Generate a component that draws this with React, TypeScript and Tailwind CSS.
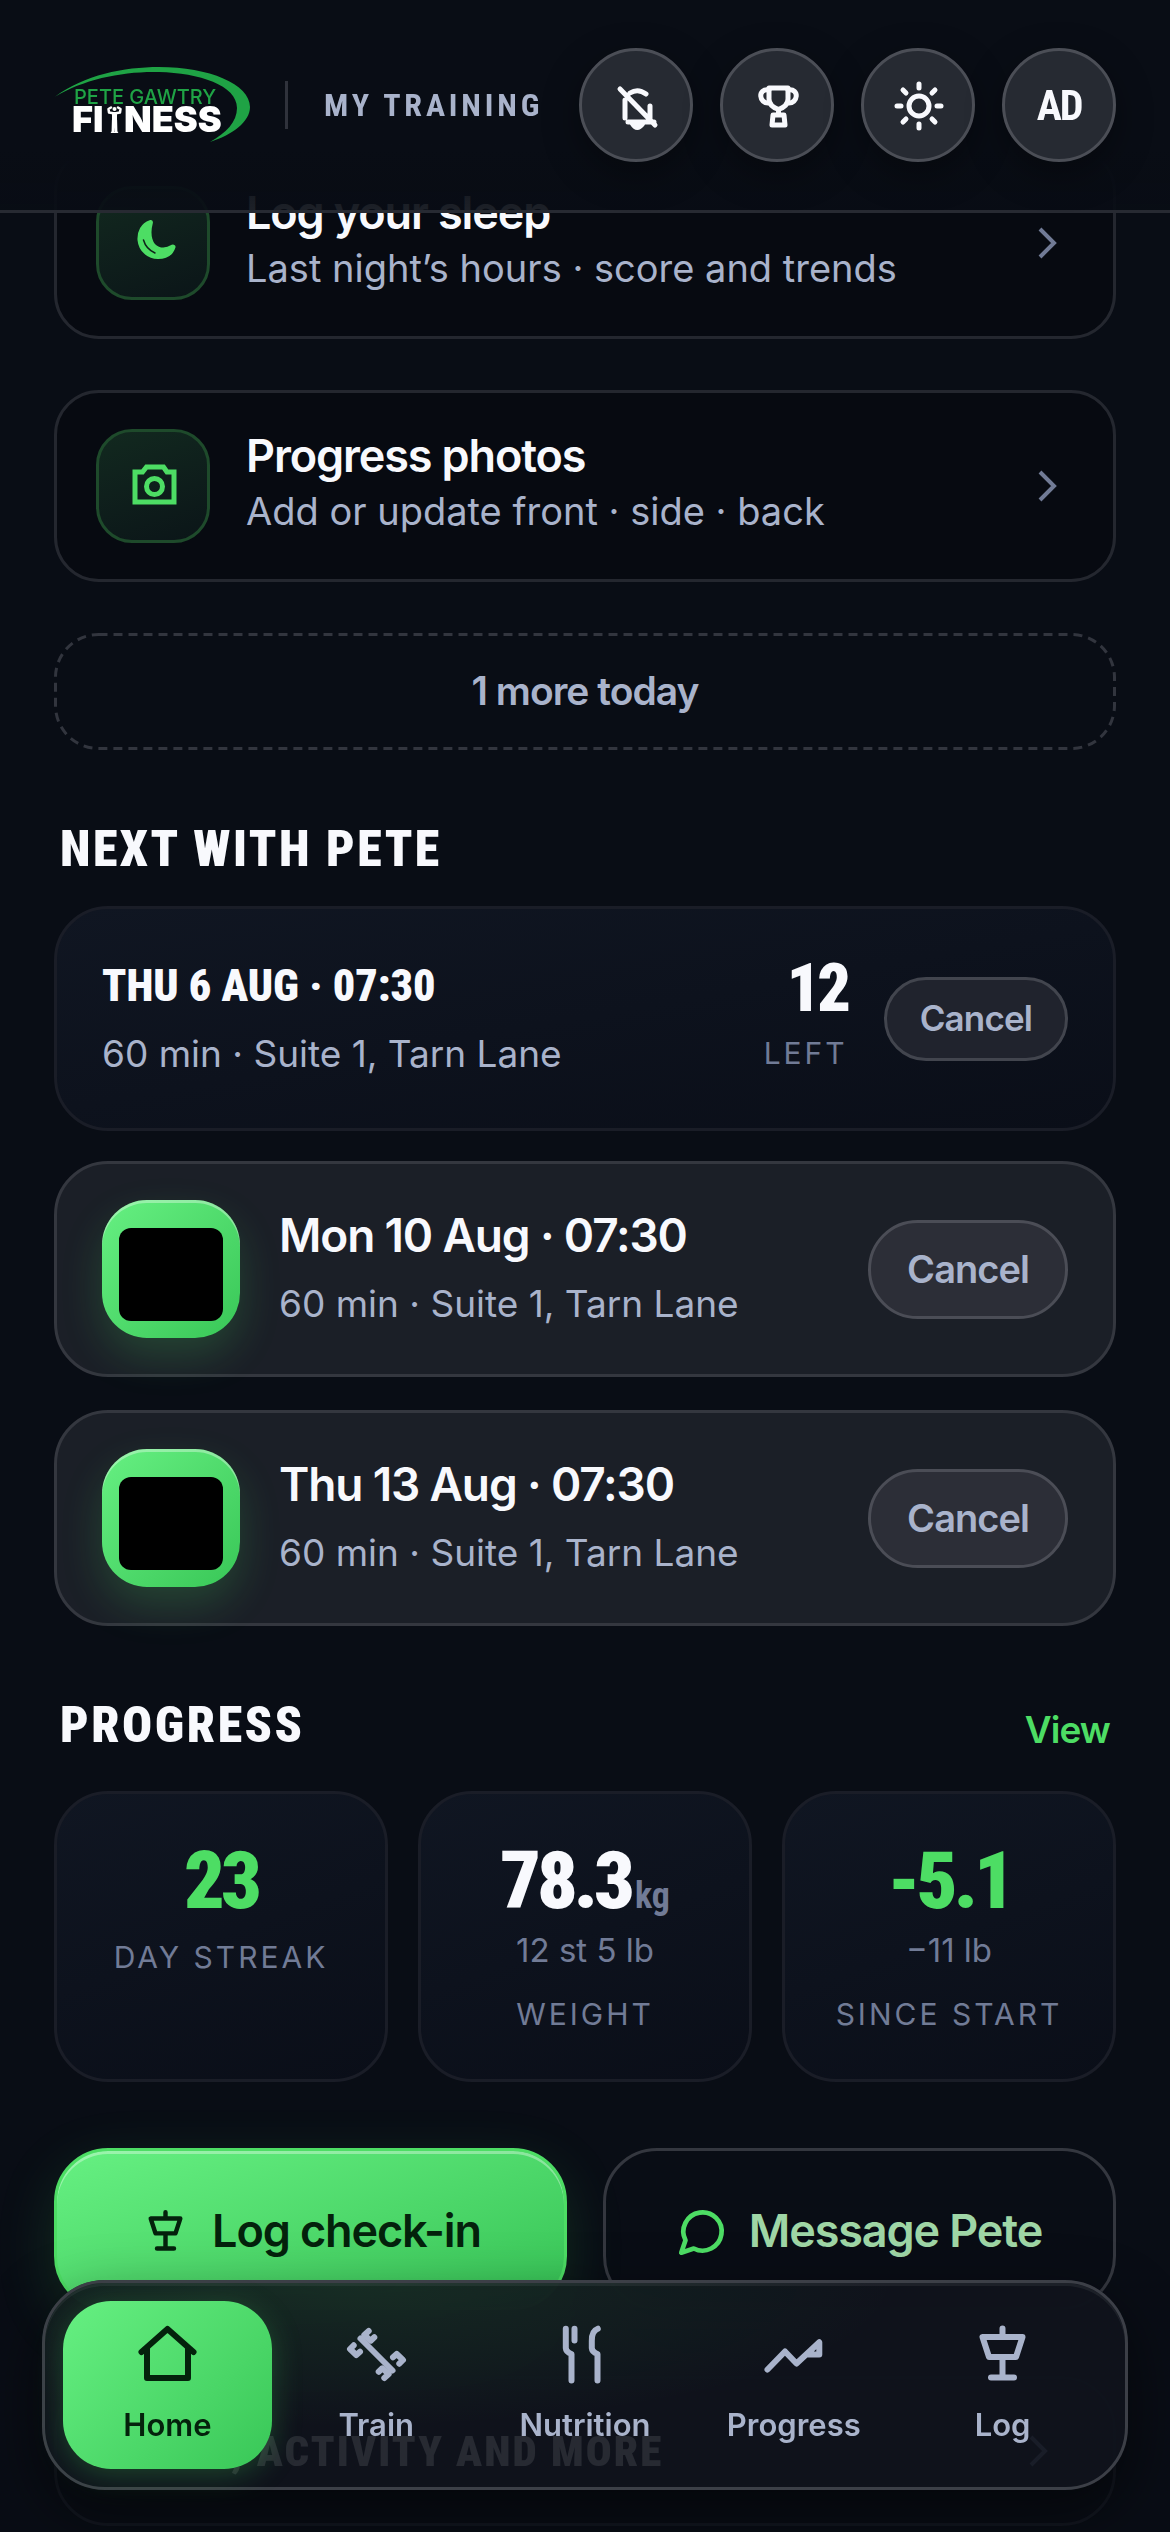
import type { ReactNode } from 'react';
import clsx from 'clsx';

const condensed = "font-['Roboto_Condensed','Liberation_Sans_Narrow',sans-serif]";

const sessions = [
  { id: 'mon', title: 'Mon 10 Aug · 07:30', detail: '60 min · Suite 1, Tarn Lane' },
  { id: 'thu', title: 'Thu 13 Aug · 07:30', detail: '60 min · Suite 1, Tarn Lane' },
];

type IconProps = {
  className?: string;
  box?: string;
  width?: number;
  children: ReactNode;
};

function Icon({ className, box = '0 0 69 69', width = 6, children }: IconProps) {
  return (
    <svg
      className={className}
      viewBox={box}
      fill="none"
      stroke="currentColor"
      strokeWidth={width}
      strokeLinecap="round"
      strokeLinejoin="round"
      aria-hidden="true"
    >
      {children}
    </svg>
  );
}

function ScaleShape() {
  return <path d="M34.5 8.5V17M14.5 17H54.5L48 37H21ZM34.5 37V57.5M23 57.5H46" />;
}

function Chevron({ className }: { className?: string }) {
  return (
    <Icon className={clsx('h-9 w-9 shrink-0', className)} box="0 0 36 36" width={4}>
      <path d="M11 4 25 18 11 32" strokeLinecap="butt" strokeLinejoin="miter" />
    </Icon>
  );
}

function Logo() {
  return (
    <svg className="h-[76px] w-[196px] shrink-0" viewBox="0 0 196 76" role="img" aria-label="Pete Gawtry Fitness">
      <path
        fill="#1fa345"
        d="M1 29.7C30 8 70 0 105 0C155 0 196 17 196 40C196 55 178 68 156 75C172 66 183 55 183 41C183 18 145 6 105 5C70 4 30 12 1 29.7Z"
      />
      <text x="20" y="37" fill="#1fa345" className="font-['Inter',sans-serif] text-[20px] font-medium">
        PETE GAWTRY
      </text>
      <text x="18" y="65" fill="#fff" className="font-['Inter',sans-serif] text-[36px] font-black">
        FI
      </text>
      <g fill="none" stroke="#fff" strokeLinecap="round" strokeLinejoin="round">
        <circle cx="60.5" cy="42" r="2" fill="#fff" stroke="none" />
        <path strokeWidth="2.5" d="M57 40.5 54.5 42 55 45.5 60.5 46.5 66 45.5 66.5 42 64 40.5" />
        <path strokeWidth="5" d="M60.5 47.5V52" />
        <path strokeWidth="2.8" d="M59.3 53 59 64M61.7 53 62 64" />
        <path strokeWidth="1.5" d="M57.5 65.2H63.5" />
      </g>
      <text x="70" y="65" fill="#fff" className="font-['Inter',sans-serif] text-[36px] font-black">
        NESS
      </text>
    </svg>
  );
}

function RoundButton({ label, children }: { label: string; children: ReactNode }) {
  return (
    <button
      type="button"
      aria-label={label}
      className="flex h-[114px] w-[114px] items-center justify-center rounded-full border-3 border-[#4b4e56] bg-[#262a32] text-[#f8f9fd] shadow-[0_12px_36px_rgba(0,0,0,0.35)]"
    >
      {children}
    </button>
  );
}

function Header() {
  return (
    <header className="fixed inset-x-0 top-0 z-40 flex h-[213px] items-center justify-between border-b-3 border-[#272a32] bg-linear-to-b from-[#090d15] from-70% to-[#090d15]/92 px-[54px]">
      <div className="flex items-center">
        <Logo />
        <span className="ml-[35px] h-12 w-[3px] bg-[#2f323b]" />
        <span className={clsx(condensed, 'ml-9 text-[32px] font-bold tracking-[0.12em] text-[#a9b3cb]')}>
          MY TRAINING
        </span>
      </div>
      <div className="flex gap-[27px]">
        <RoundButton label="Notifications off">
          <Icon className="h-[60px] w-[60px]" box="-30 -30 60 60" width={5}>
            <path d="M-16-16 19 20M-6-12Q2-17 10-11M-11-5V13M14 1V14M-8 17H18" />
            <path d="M-4 19Q1 27 7 19Z" strokeWidth={4} />
          </Icon>
        </RoundButton>
        <RoundButton label="Achievements">
          <Icon className="h-[60px] w-[60px]" box="-30 -30 60 60" width={5}>
            <path d="M-8-17H11V-6Q11 1 1.5 4.5Q-8 1-8-6ZM1.5 4.5V9" />
            <path d="M-8-15C-20-17-18-1-8-2M11-15C23-17 21-1 11-2" />
            <path d="M-4 10H7L8 20H-5Z" />
          </Icon>
        </RoundButton>
        <RoundButton label="Light mode">
          <Icon className="h-[60px] w-[60px]" box="-30 -30 60 60" width={5}>
            <circle cx="1" cy="1" r="10" />
            <path d="M1-21V-17M1 19V23M-21 1H-17M19 1H23M-15-15-12-12M14 14 17 17M17-15 14-12M-12 14-15 17" />
          </Icon>
        </RoundButton>
        <RoundButton label="Account">
          <span className={clsx(condensed, 'text-[42px] font-bold tracking-tighter')}>AD</span>
        </RoundButton>
      </div>
    </header>
  );
}

function TaskCard({ icon, title, detail }: { icon: ReactNode; title: string; detail: string }) {
  return (
    <a
      href="#task"
      className="flex h-48 items-center gap-9 rounded-[45px] border-3 border-[#24272f] bg-[#070a11] px-[39px]"
    >
      <span className="flex h-[114px] w-[114px] shrink-0 items-center justify-center rounded-[36px] border-3 border-[#1e4a2b] bg-linear-160 from-[#12291f] to-[#0b1518] text-[#4ddd64]">
        {icon}
      </span>
      <span className="flex flex-1 flex-col pb-[9px]">
        <span className="text-[45px] leading-[60px] font-semibold tracking-tight text-[#f8f9fd]">{title}</span>
        <span className="text-[38px] leading-[51px] text-[#a9b3cb]">{detail}</span>
      </span>
      <Chevron className="mr-[9px] text-[#717b96]" />
    </a>
  );
}

function SectionTitle({ children }: { children: ReactNode }) {
  return (
    <h2 className={clsx(condensed, 'text-[50px] leading-[60px] font-black tracking-wider text-[#f8f9fd]')}>
      {children}
    </h2>
  );
}

type StatProps = {
  value: string;
  unit?: string;
  note?: string;
  label: string;
  green?: boolean;
};

function Stat({ value, unit, note, label, green }: StatProps) {
  return (
    <div className="flex h-[291px] flex-col items-center rounded-[54px] border-3 border-[#1a1d27] bg-linear-160 from-[#101622] to-[#0a0e18] pt-[45px] text-[#717b96]">
      <p
        className={clsx(
          condensed,
          'text-[80px] leading-[84px] font-black tracking-tighter',
          green ? 'text-[#4ddd64]' : 'text-[#f8f9fd]',
        )}
      >
        {value}
        {unit && (
          <span className="ml-1 text-[36px] leading-none font-bold tracking-normal text-[#717b96]">{unit}</span>
        )}
      </p>
      {note && <p className="mt-[3px] mb-[6px] text-[33px] leading-[48px]">{note}</p>}
      <p className="mt-3 text-[30px] leading-[45px] tracking-[0.1em]">{label}</p>
    </div>
  );
}

function NavItem({ label, active, children }: { label: string; active?: boolean; children: ReactNode }) {
  return (
    <a
      href={`#${label.toLowerCase()}`}
      aria-current={active ? 'page' : undefined}
      className={clsx(
        'flex h-[168px] flex-1 flex-col items-center justify-center gap-[15px] rounded-[48px] pb-1 text-[31px] leading-[42px] font-semibold',
        active
          ? 'bg-linear-135 from-[#66f082] to-[#38c757] text-[#04220c] shadow-[0_6px_30px_rgba(74,222,98,0.25)]'
          : 'text-[#a9b3cb]',
      )}
    >
      <Icon className="h-[69px] w-[69px]">{children}</Icon>
      {label}
    </a>
  );
}

function TabBar() {
  return (
    <nav className="fixed inset-x-[42px] bottom-[42px] z-30 flex rounded-[63px] border-3 border-[#3c3f47] bg-[#0f131c]/90 bg-[radial-gradient(ellipse_at_28%_0%,rgba(74,222,98,0.11),transparent_50%)] p-[18px] shadow-[0_24px_60px_rgba(0,0,0,0.5),inset_0_3px_0_rgba(255,255,255,0.06)]">
      <NavItem label="Home" active>
        <path d="M8.5 32 34.5 9 60.5 32M14 28V58H55V28" />
      </NavItem>
      <NavItem label="Train">
        <path d="M18.5 18.5 50.5 50.5" />
        <path d="M26.7 11 22.3 15 28.7 20.7 32.3 17.3M11.7 25.3 8 29 14.3 35 18 31.7M57.3 43.7 61 40 54.7 34 51 37.3M42.3 58 46.7 54 40.3 48.3 36.7 51.7" />
      </NavItem>
      <NavItem label="Nutrition">
        <path d="M15.8 8.7V28Q16 32 21.5 34V60.5M24.5 8.7V20.5M47.8 8.7Q41.5 11 41.8 21V28Q42 32 47.5 34V60.5" />
      </NavItem>
      <NavItem label="Progress">
        <path d="M8.5 49.5 26 31.5 37.5 43.5 60.3 22.3V34.5H49" />
      </NavItem>
      <NavItem label="Log">
        <ScaleShape />
      </NavItem>
    </nav>
  );
}

export default function App() {
  return (
    <div className="min-h-screen bg-[#090d15] font-['Inter',sans-serif] text-[#f8f9fd]">
      <Header />

      <main className="px-[54px] pt-[147px]">
        <section className="flex flex-col gap-[51px]">
          <TaskCard
            title="Log your sleep"
            detail="Last night’s hours · score and trends"
            icon={
              <Icon className="h-[60px] w-[60px]" box="0 0 60 60" width={5}>
                <path
                  fill="currentColor"
                  d="M27.4 9.5C20 12 16.5 19 17 27C18 37 26 43.5 35 43.5C43 43.5 48 40 50 34C45 37 40 38 35 36C27 33 24 22 27.4 9.5Z"
                />
                <path d="M20.5 27Q23 36 32 40" stroke="#0f2019" strokeWidth="1.5" />
              </Icon>
            }
          />
          <TaskCard
            title="Progress photos"
            detail="Add or update front · side · back"
            icon={
              <Icon className="h-[60px] w-[60px]" box="0 0 60 60" width={5}>
                <path d="M12 16H19.5L23.5 11H40.5L44 16H51V46H12Z" strokeLinejoin="miter" />
                <circle cx="31.5" cy="30.5" r="8" />
              </Icon>
            }
          />
          <button type="button" className="relative h-[117px] text-[39px] font-semibold tracking-tight text-[#a9b3cb]">
            <svg className="absolute inset-0 h-full w-full" fill="none" stroke="#32353e" strokeWidth={3} aria-hidden="true">
              <rect
                x="1.5"
                y="1.5"
                rx="43"
                strokeDasharray="9 6"
                className="h-[calc(100%-3px)] w-[calc(100%-3px)]"
              />
            </svg>
            1 more today
          </button>
        </section>

        <section className="pt-[69px]">
          <div className="px-[6px]">
            <SectionTitle>NEXT WITH PETE</SectionTitle>
          </div>

          <div className="mt-[27px] flex h-[225px] items-center rounded-[54px] border-3 border-[#1a1d27] bg-linear-170 from-[#101622] to-[#0a0e18] px-[45px]">
            <div className="flex-1">
              <p className={clsx(condensed, 'text-[44px] leading-[66px] font-black')}>THU 6 AUG · 07:30</p>
              <p className="mt-[3px] text-[37px] leading-[63px] text-[#a9b3cb]">60 min · Suite 1, Tarn Lane</p>
            </div>
            <div className="mr-9 text-right">
              <p className={clsx(condensed, 'text-[66px] leading-[69px] font-black tracking-tighter')}>12</p>
              <p className="text-[30px] leading-[60px] tracking-[0.1em] text-[#717b96]">LEFT</p>
            </div>
            <button
              type="button"
              className="h-[84px] rounded-full border-3 border-[#42454e] bg-[#20232d] px-[33px] text-[35px] font-semibold tracking-tight text-[#a9b3cb]"
            >
              Cancel
            </button>
          </div>

          <div className="mt-[30px] flex flex-col gap-[33px]">
            {sessions.map((session) => (
              <div
                key={session.id}
                className="flex h-[216px] items-center rounded-[54px] border-3 border-[#34373f] bg-[#1b1f27] px-[45px]"
              >
                <div className="flex h-[138px] w-[138px] items-center justify-center rounded-[45px] bg-linear-135 from-[#66f082] to-[#38c757] pt-[11px] shadow-[0_18px_42px_rgba(74,222,98,0.2),inset_0_3px_0_rgba(255,255,255,0.35)]">
                  <div className="h-[93px] w-[104px] rounded-xl bg-black" />
                </div>
                <div className="ml-[39px] flex-1">
                  <p className="text-[46px] leading-[60px] font-semibold tracking-tight">{session.title}</p>
                  <p className="mt-[9px] text-[37px] leading-[60px] text-[#a9b3cb]">{session.detail}</p>
                </div>
                <button
                  type="button"
                  className="h-[99px] rounded-full border-3 border-[#4b4d56] bg-[#2c2e37] px-9 text-[38px] font-semibold tracking-tight text-[#a9b3cb]"
                >
                  Cancel
                </button>
              </div>
            ))}
          </div>
        </section>

        <section className="pt-[69px]">
          <div className="flex items-center justify-between px-[6px]">
            <SectionTitle>PROGRESS</SectionTitle>
            <a href="#view" className="pt-2 text-[37px] leading-[51px] font-semibold tracking-tight text-[#4ddd64]">
              View
            </a>
          </div>
          <div className="mt-9 grid grid-cols-3 gap-[30px]">
            <Stat value="23" label="DAY STREAK" green />
            <Stat value="78.3" unit="kg" note="12 st 5 lb" label="WEIGHT" />
            <Stat value="-5.1" note="−11 lb" label="SINCE START" green />
          </div>
        </section>

        <div className="mt-[66px] grid grid-cols-2 gap-9 text-[45px] font-semibold tracking-tight">
          <button
            type="button"
            className="flex h-[162px] items-center justify-center gap-[21px] rounded-[54px] border-3 border-[#4ddd64] bg-linear-160 from-[#66f082] to-[#36c456] pt-1 text-[#04220c] shadow-[0_18px_60px_rgba(74,222,98,0.15),inset_0_3px_0_rgba(255,255,255,0.35)]"
          >
            <Icon className="h-[51px] w-[51px]">
              <ScaleShape />
            </Icon>
            Log check-in
          </button>
          <button
            type="button"
            className="flex h-[162px] items-center justify-center gap-[21px] rounded-[54px] border-3 border-[#34373f] pt-1 text-[#9fd6a6]"
          >
            <Icon className="h-[51px] w-[51px] text-[#4ddd64]" box="0 0 24 24" width={2.2}>
              <path d="M7.9 20A9 9 0 1 0 4 16.1L2 22Z" />
            </Icon>
            Message Pete
          </button>
        </div>

        {/* softens what scrolls under the tab bar */}
        <div className="fixed inset-x-[42px] bottom-[42px] z-10 h-[210px] rounded-[63px] bg-[#0b1018]/60 backdrop-blur-3xl" />

        <a
          href="#activity"
          className="relative z-20 mt-[66px] mb-[6px] flex h-[150px] items-center rounded-[54px] border-3 border-[#12161f] pr-[57px] pl-[174px]"
        >
          <h2 className={clsx(condensed, 'text-[43px] leading-[60px] font-black tracking-wider')}>, ACTIVITY AND MORE</h2>
          <Chevron className="ml-auto text-[#717b96]" />
        </a>
      </main>

      <TabBar />
    </div>
  );
}
